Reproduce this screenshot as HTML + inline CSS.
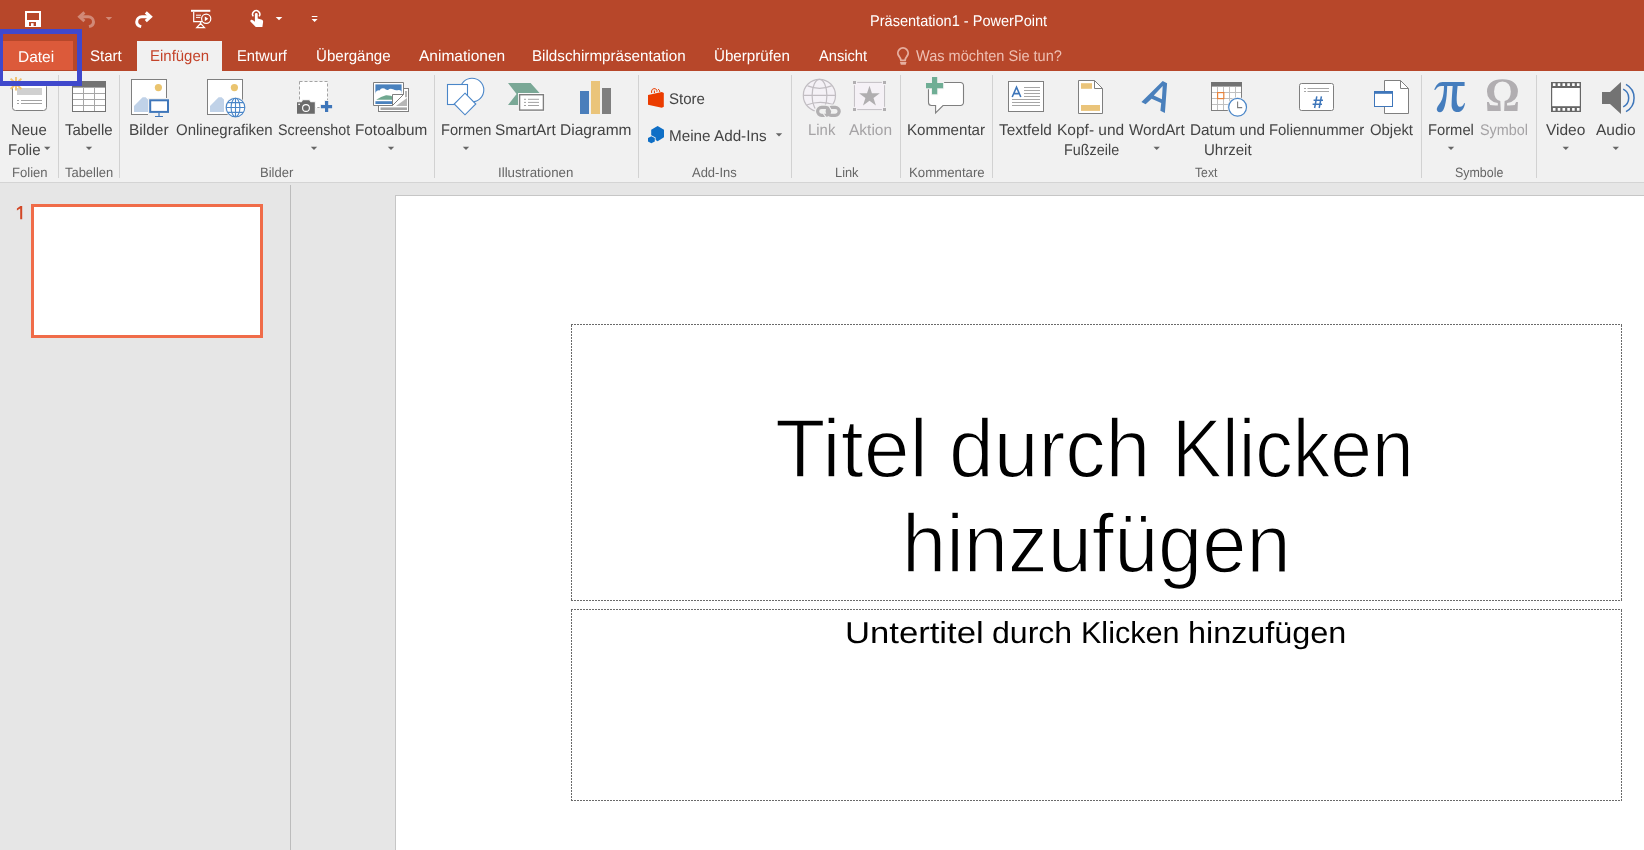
<!DOCTYPE html>
<html lang="de">
<head>
<meta charset="utf-8">
<title>Präsentation1 - PowerPoint</title>
<style>
*{margin:0;padding:0;box-sizing:border-box}
html,body{width:1644px;height:850px;overflow:hidden;background:#e6e6e6;font-family:"Liberation Sans",sans-serif}
#app{position:relative;width:1644px;height:850px;overflow:hidden}
.abs{position:absolute}
#titlebar{left:0;top:0;width:1644px;height:71px;background:#b7472a}
#tabdatei{left:3px;top:41px;width:70px;height:29px;background:#dc5a3a}
#tabein{left:137px;top:41px;width:85px;height:30px;background:#f1f1f1}
#ribbon{left:0;top:71px;width:1644px;height:111px;background:#f1f1f1}
#ribline{left:0;top:182px;width:1644px;height:1px;background:#d4d4d4}
.sep{position:absolute;top:75px;width:1px;height:103px;background:#d2d2d2}
#hl{left:0;top:29px;width:82px;height:57px;border:5px solid #3f48cc;border-left-width:3px}
#divider{left:290px;top:185px;width:1px;height:665px;background:#bcbcbc}
#thumb{left:31px;top:204px;width:232px;height:134px;border:3px solid #f06c49;background:#fff}
#slide{left:395px;top:195px;width:1300px;height:700px;background:#fff;border:1px solid #c6c6c6}
.ph{position:absolute;}
.t{position:absolute;white-space:nowrap;line-height:1;transform-origin:0 0;font-family:"Liberation Sans",sans-serif}
#icons{left:0;top:0;width:1644px;height:850px}
</style>
</head>
<body>
<div id="app">
<div class="abs" id="titlebar"></div>
<div class="abs" id="tabdatei"></div>
<div class="abs" id="tabein"></div>
<div class="abs" id="ribbon"></div>
<div class="abs" id="ribline"></div>
<div class="sep" style="left:58px"></div>
<div class="sep" style="left:119px"></div>
<div class="sep" style="left:434px"></div>
<div class="sep" style="left:638px"></div>
<div class="sep" style="left:791px"></div>
<div class="sep" style="left:900px"></div>
<div class="sep" style="left:992px"></div>
<div class="sep" style="left:1421px"></div>
<div class="sep" style="left:1536px"></div>
<div class="abs" id="divider"></div>
<div class="abs" id="thumb"></div>
<div class="abs" id="slide"></div>
<svg class="abs" style="left:0;top:0" width="1644" height="850" viewBox="0 0 1644 850" shape-rendering="crispEdges">
<g fill="none" stroke="#6a6a6a" stroke-width="1" stroke-dasharray="2 1">
<path d="M571 324.5H1622 M571 600.5H1622 M571.5 325V600 M1621.5 325V600"/>
<path d="M571 609.5H1622 M571 800.5H1622 M571.5 610V800 M1621.5 610V800"/>
</g>
</svg>

<svg class="abs" id="icons" width="1644" height="850" viewBox="0 0 1644 850">
<!-- ===== Quick access toolbar ===== -->
<g id="qat">
<path fill="#fff" fill-rule="evenodd" d="M25 11h16v16h-16z M27 13v7h12v-7z M29 22v4h7v-4z"/>
<rect x="31" y="23.2" width="2.6" height="2.8" fill="#fff"/>
<g fill="none" stroke="#fff" opacity=".36" stroke-width="3">
<path d="M84.4 12.4 L79.6 16.8 L84.4 21.2"/>
<path d="M80 16.8 H88.3 A5.2 5.2 0 0 1 93.5 22 Q93.5 25.6 89 26.6"/>
</g>
<path fill="#fff" fill-opacity=".36" d="M105.6 17h6.6l-3.3 3.3z"/>
<g fill="none" stroke="#fff" stroke-width="3">
<path d="M145.8 12.4 L150.6 16.8 L145.8 21.2"/>
<path d="M150.2 16.8 H141.9 A5.2 5.2 0 0 0 136.7 22 Q136.7 25.6 141.2 26.6"/>
</g>
<!-- present -->
<g fill="none" stroke="#fff" stroke-width="1.2">
<path d="M191 10.8H210.3" stroke-width="2"/>
<path d="M193.7 12V21.6H202"/>
<path d="M196 15.2H201 M196 17.4H200.4" stroke-width="1"/>
<circle cx="206.2" cy="18.8" r="4.6"/>
<path d="M200.6 23.4 L196.8 27.6 H204.4 Z M200.6 22V23.4" stroke-width="1.3"/>
</g>
<path fill="#fff" d="M204.8 16.4 L208.3 18.8 L204.8 21.2Z"/>
<!-- touch -->
<path fill="none" stroke="#fff" stroke-width="1.5" d="M253.3 16.4 A3.6 3.6 0 1 1 259.1 16.4"/>
<path fill="#fff" d="M254.9 14.3 a1.4 1.4 0 0 1 2.8 0 V18.4 L262 19.8 Q263.3 20.4 263.1 22 L262.4 27 H255.8 L250.4 21.6 Q249.9 20.3 251.3 19.7 Q252.2 19.5 253 20.2 L254.9 21.8 Z"/>
<path fill="#fff" d="M275.7 17h6.6l-3.3 3.3z"/>
<path fill="#fff" d="M311.8 16h5.6v1h-5.6z M311.6 19h6l-3 3z"/>
</g>
<!-- bulb -->
<path fill="none" stroke="#e6ae9f" stroke-width="1.9" d="M901 60.4Q900.8 58.4 899.2 56.5A5.1 5.1 0 1 1 906.8 56.5Q905.2 58.4 905 60.4Z"/>
<path fill="#e6ae9f" d="M899.9 62h6.7l-0.9 2.8h-4.9z"/>
<!-- ===== dropdown arrows ===== -->
<g fill="#666">
<path d="M44 146.8h6.4l-3.2 3.2z"/>
<path d="M85.8 146.8h6.4l-3.2 3.2z"/>
<path d="M310.8 146.8h6.4l-3.2 3.2z"/>
<path d="M387.8 146.8h6.4l-3.2 3.2z"/>
<path d="M462.8 146.8h6.4l-3.2 3.2z"/>
<path d="M1153.5 146.8h6.4l-3.2 3.2z"/>
<path d="M1447.8 146.8h6.4l-3.2 3.2z"/>
<path d="M1562.6 146.8h6.4l-3.2 3.2z"/>
<path d="M1612.6 146.8h6.4l-3.2 3.2z"/>
<path d="M775.8 133.2h6.4l-3.2 3.2z"/>
</g>
<!-- ===== Neue Folie ===== -->
<rect x="12.5" y="83.5" width="34" height="27" rx="3" fill="#fff" stroke="#7f7f7f"/>
<rect x="17" y="88" width="25" height="7" fill="#d0d0d0"/>
<path fill="none" stroke="#a3a3a3" d="M17 100.5h2 M21 100.5h21 M17 103.5h2 M21 103.5h21"/>
<g stroke="#f0c272" stroke-width="2" fill="none">
<path d="M16 77V90.6 M10.6 78.6L21.4 89 M10.6 89L21.4 78.6"/>
</g>
<!-- ===== Tabelle ===== -->
<rect x="72.5" y="81.5" width="33" height="30" fill="#fff" stroke="#737373"/>
<path fill="none" stroke="#a6a6a6" d="M83.5 88V111 M94.5 88V111 M73 93.5H105 M73 99.5H105 M73 105.5H105"/>
<rect x="72" y="81" width="34" height="6.6" fill="#737373"/>
<!-- ===== Bilder ===== -->
<rect x="131.5" y="79.5" width="35" height="35" fill="#fff" stroke="#7f7f7f"/>
<circle cx="158.4" cy="87.6" r="3.6" fill="#eac46f"/>
<path fill="#c0d2e8" d="M134 112V106L142.6 97.2H145.6L148 99.6V112Z"/>
<rect x="148" y="98" width="22" height="20" fill="#f1f1f1"/>
<rect x="150.2" y="100.3" width="17.8" height="11.6" fill="#fff" stroke="#3e76ba" stroke-width="2"/>
<path fill="none" stroke="#3e76ba" d="M159 113V116 M155 116.5H163" stroke-width="1.2"/>
<!-- ===== Onlinegrafiken ===== -->
<rect x="207.5" y="79.5" width="35" height="35" fill="#fff" stroke="#7f7f7f"/>
<circle cx="234.4" cy="87.6" r="3.6" fill="#eac46f"/>
<path fill="#c0d2e8" d="M210 112V106L218.6 97.2H221.6L224 99.6V112Z"/>
<circle cx="235.5" cy="107.5" r="10.6" fill="#f1f1f1"/>
<g fill="none" stroke="#4a86c8" stroke-width="1.1">
<circle cx="235.5" cy="107.5" r="9.3" fill="#fff"/>
<ellipse cx="235.5" cy="107.5" rx="4.4" ry="9.3"/>
<path d="M235.5 98.2V116.8 M226.2 107.5H244.8 M227.6 102.6H243.4 M227.6 112.4H243.4"/>
</g>
<!-- ===== Screenshot ===== -->
<rect x="299.5" y="81.5" width="28" height="26" fill="#fff" stroke="#a3a3a3" stroke-dasharray="3 2"/>
<rect x="315.6" y="106.4" width="4.6" height="1.6" fill="#fff"/>
<path fill="none" stroke="#a3a3a3" d="M317.3 107.5H319.7"/>
<path fill="#6a6a6a" stroke="#f1f1f1" stroke-width="2" paint-order="stroke" d="M297 102.3H301.6L303 100.2H309.2L310.6 102.3H314.8V113.8H297Z"/>
<circle cx="306" cy="108" r="3.4" fill="none" stroke="#fff" stroke-width="1.1"/>
<rect x="298.3" y="103.6" width="1.6" height="1.4" fill="#fff"/>
<path fill="#3e76ba" stroke="#f1f1f1" stroke-width="2" paint-order="stroke" d="M325 101h3.2v4h3.9v3.2h-3.9v3.8h-3.2v-3.8h-4.1v-3.2h4.1z"/>
<!-- ===== Fotoalbum ===== -->
<rect x="378.5" y="88.5" width="30" height="23" fill="#fff" stroke="#7f7f7f"/>
<rect x="380.5" y="107.4" width="26.5" height="2.6" fill="#a6a6a6"/>
<path fill="#b6b6b6" d="M396 106L407 98V106Z M405 91h2v6.2h-2z"/>
<path fill="#fff" stroke="#7f7f7f" d="M373.5 82.5H403.5V94.5L392.5 105.5H373.5Z"/>
<rect x="375.4" y="84.4" width="26.2" height="9" fill="#4a82be"/>
<path fill="#fff" d="M375.4 92.5 Q377 90 379.5 90.4 Q381 87.6 384.5 88.6 Q386 90.4 388 90 Q390 88 393 89.2 Q395.5 90.8 397.5 90.2 Q400 89.6 401.6 91.4 V94.5 H375.4Z"/>
<path fill="#70a890" d="M376.2 99.8 Q381 96.4 386 95.2 Q390.5 95 394.5 97.4 L392.2 99.8Z"/>
<rect x="375.4" y="101.2" width="16.8" height="2.8" fill="#4a82be"/>
<path fill="#fff" stroke="#7f7f7f" d="M392.5 94.5H403.5L392.5 105.5Z"/>
<!-- ===== Formen ===== -->
<g fill="#fff" stroke="#4a86c8" stroke-width="1.1">
<circle cx="472" cy="90" r="11.8"/>
<rect x="447.5" y="84.5" width="20" height="20"/>
<path d="M465 93.2L475.8 104L465 114.8L454.2 104Z"/>
</g>
<!-- ===== SmartArt ===== -->
<path fill="#7aa896" d="M508 83H530.6L540 93.6V105H508L516.6 94Z"/>
<rect x="518" y="93" width="27" height="18.6" fill="#fafafa"/>
<rect x="519.6" y="94.7" width="23.8" height="15.4" fill="#fff" stroke="#7f7f7f" stroke-width="1.4"/>
<path fill="none" stroke="#a3a3a3" d="M524 99.3h2 M528 99.3h11 M524 102.4h2 M528 102.4h11 M524 105.5h2 M528 105.5h11"/>
<!-- ===== Diagramm ===== -->
<rect x="580" y="91" width="9" height="23" fill="#4a7ebb"/>
<rect x="591" y="81" width="9" height="33" fill="#eac47a"/>
<rect x="602" y="88" width="9" height="26" fill="#7f7f7f"/>
<!-- ===== Store ===== -->
<path fill="none" stroke="#eb3c00" stroke-width="1" d="M651.6 93V91A2.8 2.8 0 0 1 656.9 90.2V91.8 M654.4 90.6V93 M658.1 89.2Q659.8 89.8 659.8 92"/>
<path fill="#eb3c00" d="M648 95L661.8 92.1L663.8 93.1V106.7L661.8 107.7L648 104.8Z"/>
<!-- ===== Meine Add-Ins ===== -->
<path fill="#0f6fc6" d="M657.6 126L664 129.7V137.3L657.6 141.2L651.2 137.3V129.7Z"/>
<path fill="#0f6fc6" stroke="#f1f1f1" stroke-width="1.6" paint-order="stroke" d="M651.4 136.2L654.8 138V141.4L651.4 143.2L648 141.4V138Z"/>
<!-- ===== Link (disabled) ===== -->
<g fill="none" stroke="#c1bdc2" stroke-width="1.2">
<circle cx="819.4" cy="95.4" r="16.1" fill="#f4f1f6"/>
<ellipse cx="819.5" cy="95.4" rx="7.4" ry="16.1"/>
<path d="M803.3 95.4H835.5 M807.6 85.9Q819.6 90.8 831.6 85.9 M807.2 104.8Q819.6 100 833 104.5"/>
</g>
<rect x="814.6" y="104.4" width="27.8" height="14" rx="7" fill="#f1f1f1"/>
<g fill="none" stroke="#b1afb1" stroke-width="3.2">
<rect x="817.6" y="107.4" width="12" height="7.9" rx="3.95"/>
<rect x="827.2" y="107.4" width="12" height="7.9" rx="3.95"/>
</g>
<path fill="none" stroke="#f1f1f1" stroke-width="1.1" d="M828.7 105.4L831.6 110.8 M822.4 112.2L826 117.4"/>
<!-- ===== Aktion (disabled) ===== -->
<rect x="854" y="82" width="31" height="28" fill="#f5f1f6"/>
<path fill="none" stroke="#c3bfc4" d="M857.2 82.4H881.9 M857.2 109.6H881.9 M854.45 85.2V106.8 M884.55 85.2V106.8"/>
<path fill="#b1afb1" d="M853 81h3v3h-3z M883 81h3v3h-3z M853 108h3v3h-3z M883 108h3v3h-3z"/>
<path fill="#b0aeb0" d="M869.5 85.7L871.9 93.2L879.8 93.2L873.5 97.9L875.9 105.4L869.5 100.8L863.0 105.4L865.4 97.9L859.1 93.2L867.0 93.2Z"/>
<!-- ===== Kommentar ===== -->
<path fill="#fff" stroke="#7f7f7f" stroke-width="1.1" d="M931.5 82.5H960.5a3 3 0 0 1 3 3V102.5a3 3 0 0 1 -3 3H943L935.6 113V105.5H931.5a3 3 0 0 1 -3 -3V85.5a3 3 0 0 1 3 -3Z"/>
<path fill="#6fae95" stroke="#f1f1f1" stroke-width="2" paint-order="stroke" d="M932 77h5.2v6h5.9v5.2h-5.9v6h-5.2v-6h-6v-5.2h6z"/>
<!-- ===== Textfeld ===== -->
<rect x="1008.5" y="81.5" width="35" height="30" fill="#fff" stroke="#7f7f7f"/>
<path fill="none" stroke="#3e76ba" stroke-width="1.6" d="M1012.2 97L1016.5 87.2L1020.8 97 M1013.8 93.6H1019.2"/>
<path fill="none" stroke="#a6a6a6" d="M1024 87.5h16 M1024 90.5h16 M1024 93.5h16 M1024 96.5h16 M1012 99.5h28 M1012 102.5h28 M1012 105.5h28"/>
<!-- ===== Kopf-/Fusszeile ===== -->
<path fill="#fff" stroke="#7f7f7f" d="M1078.5 80.5H1094.5L1102.5 88.5V113.5H1078.5Z"/>
<path fill="none" stroke="#7f7f7f" d="M1094.5 80.5V88.5H1102.5"/>
<rect x="1081" y="83.2" width="11" height="5.6" fill="#eac47a"/>
<rect x="1081" y="105" width="19" height="5.9" fill="#eac47a"/>
<!-- ===== WordArt ===== -->
<path fill="#4a80bc" fill-rule="evenodd" d="M1141.4 101.9L1162.7 80.9L1167.1 83.2L1164.9 113L1160.4 110.8L1161.2 103.1L1151.6 98.8L1145.6 104.2Z M1162.7 86.1L1153.8 95.5L1161.9 99.2Z"/>
<!-- ===== Datum und Uhrzeit ===== -->
<rect x="1211.5" y="82.5" width="30" height="28" fill="#fff" stroke="#7f7f7f"/>
<path fill="none" stroke="#c0c0c0" d="M1217.5 87V110 M1223.5 87V110 M1229.5 87V110 M1235.5 87V110 M1212 92.5H1241 M1212 98.5H1241 M1212 104.5H1241"/>
<rect x="1211" y="82" width="31" height="4.6" fill="#737373"/>
<rect x="1217.6" y="92.6" width="6.2" height="6" fill="#fff" stroke="#e8823a" stroke-width="1.2"/>
<circle cx="1237.6" cy="107.3" r="10.4" fill="#f1f1f1"/>
<circle cx="1237.6" cy="107.3" r="8.9" fill="#fff" stroke="#4a86c8" stroke-width="1.2"/>
<path fill="none" stroke="#7f7f7f" stroke-width="1.1" d="M1237.6 101.4V107.6H1242.2"/>
<!-- ===== Foliennummer ===== -->
<rect x="1299.5" y="83.5" width="34" height="27" rx="2" fill="#fff" stroke="#7f7f7f"/>
<path fill="none" stroke="#a6a6a6" d="M1304 88.5h2 M1307.5 88.5h21.5 M1304 91.5h2 M1307.5 91.5h21.5"/>
<path fill="none" stroke="#3e76ba" stroke-width="1.5" d="M1316.8 96.4L1314.6 108 M1321.4 96.4L1319.2 108 M1313.6 100.3H1323 M1312.6 104.3H1322"/>
<!-- ===== Objekt ===== -->
<path fill="#fff" stroke="#7f7f7f" d="M1384.5 80.5H1400.5L1408.5 88.5V113.5H1384.5Z"/>
<path fill="none" stroke="#7f7f7f" d="M1400.5 80.5V88.5H1408.5"/>
<rect x="1374.5" y="91.5" width="18" height="15" fill="#fff" stroke="#3e76ba"/>
<rect x="1374" y="91" width="19" height="2.8" fill="#3e76ba"/>
<!-- ===== Video ===== -->
<rect x="1551" y="82" width="30" height="30" fill="#666"/>
<rect x="1552.2" y="88" width="27.6" height="18.2" fill="#fff"/>
<g fill="#fff">
<path d="M1552.9 83.3h2.6v2.7h-2.6z M1557.7 83.3h2.6v2.7h-2.6z M1562.5 83.3h2.6v2.7h-2.6z M1567.3 83.3h2.6v2.7h-2.6z M1572.1 83.3h2.6v2.7h-2.6z M1576.9 83.3h2.6v2.7h-2.6z"/>
<path d="M1552.9 108.1h2.6v2.7h-2.6z M1557.7 108.1h2.6v2.7h-2.6z M1562.5 108.1h2.6v2.7h-2.6z M1567.3 108.1h2.6v2.7h-2.6z M1572.1 108.1h2.6v2.7h-2.6z M1576.9 108.1h2.6v2.7h-2.6z"/>
</g>
<!-- ===== Audio ===== -->
<path fill="#737373" d="M1602 92H1610L1621 82V114L1610 104H1602Z"/>
<g fill="none" stroke="#3e76ba" stroke-width="1.5">
<path d="M1623.2 89.2A9.8 9.8 0 0 1 1623.2 106.8"/>
<path d="M1626 84.4A15.5 15.5 0 0 1 1626 111.6"/>
</g>
<!-- ===== Formel (pi) ===== -->
<path fill="#457dbd" d="M1434.2 89.8C1436 85.5 1438.5 82.1 1442.5 82.1L1464.6 82.1L1464.6 85.9L1457.6 85.9C1457 92 1456.6 97 1456.7 100.6C1456.8 104 1457.6 106.6 1459.6 106.8C1461.8 107 1463.4 105.6 1464.2 103L1465 103.4C1464.2 108.5 1461.5 112.1 1457.6 112.1C1453.4 112.1 1451.4 108.8 1451.6 104.4C1451.7 99 1452.2 92 1452.7 85.9L1447.2 85.9C1447 93 1446.4 99 1445.6 102.5C1444.8 106.5 1443.6 112.2 1440 112.2C1437.6 112.2 1436.3 110.2 1436.9 108.2C1437.6 105.8 1440.6 103.4 1442.1 99.3C1443.4 95.5 1443.9 91 1444 85.9L1441.5 85.9C1438.8 85.9 1436.8 87.5 1435.2 90Z"/>
<!-- ===== thumbnail number 1 ===== -->
<path fill="#d24726" d="M20.4 205.9H22.2V219.2H20.2V208.4L16.9 210.4V208.4Z"/>

</svg>
<div class="abs" id="labels" style="left:0;top:0;width:1644px;height:850px;will-change:transform">
<span class="t" style="left:869.72px;top:12.88px;font-size:15.5px;color:#ffffff;transform:scaleX(0.9387) rotate(0.03deg);">Präsentation1 - PowerPoint</span>
<span class="t" style="left:18.00px;top:48.88px;font-size:15.5px;color:#ffffff;transform:scaleX(1.0000) rotate(0.03deg);">Datei</span>
<span class="t" style="left:89.74px;top:47.88px;font-size:15.5px;color:#ffffff;transform:scaleX(0.9700) rotate(0.03deg);">Start</span>
<span class="t" style="left:149.54px;top:47.88px;font-size:15.5px;color:#c4432a;transform:scaleX(0.9657) rotate(0.03deg);">Einfügen</span>
<span class="t" style="left:237.12px;top:47.88px;font-size:15.5px;color:#ffffff;transform:scaleX(0.9492) rotate(0.03deg);">Entwurf</span>
<span class="t" style="left:315.76px;top:47.88px;font-size:15.5px;color:#ffffff;transform:scaleX(0.9729) rotate(0.03deg);">Übergänge</span>
<span class="t" style="left:419.30px;top:47.88px;font-size:15.5px;color:#ffffff;transform:scaleX(1.0000) rotate(0.03deg);">Animationen</span>
<span class="t" style="left:531.96px;top:47.88px;font-size:15.5px;color:#ffffff;transform:scaleX(0.9799) rotate(0.03deg);">Bildschirmpräsentation</span>
<span class="t" style="left:714.04px;top:47.88px;font-size:15.5px;color:#ffffff;transform:scaleX(0.9779) rotate(0.03deg);">Überprüfen</span>
<span class="t" style="left:818.50px;top:47.88px;font-size:15.5px;color:#ffffff;transform:scaleX(0.9447) rotate(0.03deg);">Ansicht</span>
<span class="t" style="left:915.74px;top:47.88px;font-size:15.5px;color:#eebfb2;transform:scaleX(0.9388) rotate(0.03deg);">Was möchten Sie tun?</span>
<span class="t" style="left:10.68px;top:121.88px;font-size:15.5px;color:#444444;transform:scaleX(0.9633) rotate(0.03deg);">Neue</span>
<span class="t" style="left:8.00px;top:141.88px;font-size:15.5px;color:#444444;transform:scaleX(0.9665) rotate(0.03deg);">Folie</span>
<span class="t" style="left:64.86px;top:121.88px;font-size:15.5px;color:#444444;transform:scaleX(0.9694) rotate(0.03deg);">Tabelle</span>
<span class="t" style="left:128.78px;top:121.88px;font-size:15.5px;color:#444444;transform:scaleX(1.0000) rotate(0.03deg);">Bilder</span>
<span class="t" style="left:175.90px;top:121.88px;font-size:15.5px;color:#444444;transform:scaleX(0.9674) rotate(0.03deg);">Onlinegrafiken</span>
<span class="t" style="left:277.90px;top:121.88px;font-size:15.5px;color:#444444;transform:scaleX(0.9209) rotate(0.03deg);">Screenshot</span>
<span class="t" style="left:355.36px;top:121.88px;font-size:15.5px;color:#444444;transform:scaleX(0.9883) rotate(0.03deg);">Fotoalbum</span>
<span class="t" style="left:441.28px;top:121.88px;font-size:15.5px;color:#444444;transform:scaleX(0.9446) rotate(0.03deg);">Formen</span>
<span class="t" style="left:495.02px;top:121.88px;font-size:15.5px;color:#444444;transform:scaleX(0.9930) rotate(0.03deg);">SmartArt</span>
<span class="t" style="left:560.00px;top:121.88px;font-size:15.5px;color:#444444;transform:scaleX(1.0000) rotate(0.03deg);">Diagramm</span>
<span class="t" style="left:668.54px;top:90.88px;font-size:15.5px;color:#444444;transform:scaleX(0.9700) rotate(0.03deg);">Store</span>
<span class="t" style="left:669.05px;top:127.88px;font-size:15.5px;color:#444444;transform:scaleX(0.9847) rotate(0.03deg);">Meine Add-Ins</span>
<span class="t" style="left:808.20px;top:121.88px;font-size:15.5px;color:#a5a3a5;transform:scaleX(0.9614) rotate(0.03deg);">Link</span>
<span class="t" style="left:848.90px;top:121.88px;font-size:15.5px;color:#a5a3a5;transform:scaleX(1.0000) rotate(0.03deg);">Aktion</span>
<span class="t" style="left:907.14px;top:121.88px;font-size:15.5px;color:#444444;transform:scaleX(0.9742) rotate(0.03deg);">Kommentar</span>
<span class="t" style="left:998.70px;top:121.88px;font-size:15.5px;color:#444444;transform:scaleX(0.9887) rotate(0.03deg);">Textfeld</span>
<span class="t" style="left:1056.50px;top:121.88px;font-size:15.5px;color:#444444;transform:scaleX(1.0000) rotate(0.03deg);">Kopf- und</span>
<span class="t" style="left:1063.50px;top:141.88px;font-size:15.5px;color:#444444;transform:scaleX(0.9276) rotate(0.03deg);">Fußzeile</span>
<span class="t" style="left:1129.00px;top:121.88px;font-size:15.5px;color:#444444;transform:scaleX(0.9842) rotate(0.03deg);">WordArt</span>
<span class="t" style="left:1189.66px;top:121.88px;font-size:15.5px;color:#444444;transform:scaleX(0.9903) rotate(0.03deg);">Datum und</span>
<span class="t" style="left:1203.76px;top:141.88px;font-size:15.5px;color:#444444;transform:scaleX(0.9702) rotate(0.03deg);">Uhrzeit</span>
<span class="t" style="left:1269.08px;top:121.88px;font-size:15.5px;color:#444444;transform:scaleX(0.9609) rotate(0.03deg);">Foliennummer</span>
<span class="t" style="left:1370.10px;top:121.88px;font-size:15.5px;color:#444444;transform:scaleX(0.9601) rotate(0.03deg);">Objekt</span>
<span class="t" style="left:1428.00px;top:121.88px;font-size:15.5px;color:#444444;transform:scaleX(0.9514) rotate(0.03deg);">Formel</span>
<span class="t" style="left:1479.60px;top:121.88px;font-size:15.5px;color:#a5a3a5;transform:scaleX(0.9283) rotate(0.03deg);">Symbol</span>
<span class="t" style="left:1545.60px;top:121.88px;font-size:15.5px;color:#444444;transform:scaleX(1.0000) rotate(0.03deg);">Video</span>
<span class="t" style="left:1596.30px;top:121.88px;font-size:15.5px;color:#444444;transform:scaleX(1.0000) rotate(0.03deg);">Audio</span>
<span class="t" style="left:12.20px;top:166.07px;font-size:13.5px;color:#666666;transform:scaleX(0.9691) rotate(0.03deg);">Folien</span>
<span class="t" style="left:64.94px;top:166.07px;font-size:13.5px;color:#666666;transform:scaleX(0.9591) rotate(0.03deg);">Tabellen</span>
<span class="t" style="left:260.12px;top:166.07px;font-size:13.5px;color:#666666;transform:scaleX(0.9647) rotate(0.03deg);">Bilder</span>
<span class="t" style="left:497.50px;top:166.07px;font-size:13.5px;color:#666666;transform:scaleX(0.9840) rotate(0.03deg);">Illustrationen</span>
<span class="t" style="left:692.10px;top:166.07px;font-size:13.5px;color:#666666;transform:scaleX(0.9609) rotate(0.03deg);">Add-Ins</span>
<span class="t" style="left:834.50px;top:166.07px;font-size:13.5px;color:#666666;transform:scaleX(0.9500) rotate(0.03deg);">Link</span>
<span class="t" style="left:908.72px;top:166.07px;font-size:13.5px;color:#666666;transform:scaleX(0.9799) rotate(0.03deg);">Kommentare</span>
<span class="t" style="left:1194.70px;top:166.07px;font-size:13.5px;color:#666666;transform:scaleX(0.9038) rotate(0.03deg);">Text</span>
<span class="t" style="left:1455.10px;top:166.07px;font-size:13.5px;color:#666666;transform:scaleX(0.9206) rotate(0.03deg);">Symbole</span>
<span class="t" style="left:1484.84px;top:70.97px;font-size:48px;color:#b1aeb1;transform:scaleX(0.9070) rotate(0.03deg);font-family:'Liberation Serif';font-weight:bold;">Ω</span>
<span class="t" style="left:774.74px;top:406.94px;font-size:83px;color:#000000;transform:scaleX(0.9951) rotate(0.03deg);-webkit-text-stroke:1.6px #fff;">Titel</span>
<span class="t" style="left:948.72px;top:406.94px;font-size:83px;color:#000000;transform:scaleX(0.9694) rotate(0.03deg);-webkit-text-stroke:1.6px #fff;">durch</span>
<span class="t" style="left:1172.00px;top:406.94px;font-size:83px;color:#000000;transform:scaleX(0.9034) rotate(0.03deg);-webkit-text-stroke:1.6px #fff;">Klicken</span>
<span class="t" style="left:901.80px;top:501.54px;font-size:83px;color:#000000;transform:scaleX(0.9568) rotate(0.03deg);-webkit-text-stroke:1.6px #fff;">hinzufügen</span>
<span class="t" style="left:845.26px;top:618.15px;font-size:30.3px;color:#000000;transform:scaleX(1.1434) rotate(0.03deg);">Untertitel</span>
<span class="t" style="left:992.08px;top:618.15px;font-size:30.3px;color:#000000;transform:scaleX(1.0583) rotate(0.03deg);">durch</span>
<span class="t" style="left:1081.16px;top:618.15px;font-size:30.3px;color:#000000;transform:scaleX(1.0077) rotate(0.03deg);">Klicken</span>
<span class="t" style="left:1188.40px;top:618.15px;font-size:30.3px;color:#000000;transform:scaleX(1.0683) rotate(0.03deg);">hinzufügen</span>
</div>
<div class="abs" id="hl"></div>
</div>
</body>
</html>
